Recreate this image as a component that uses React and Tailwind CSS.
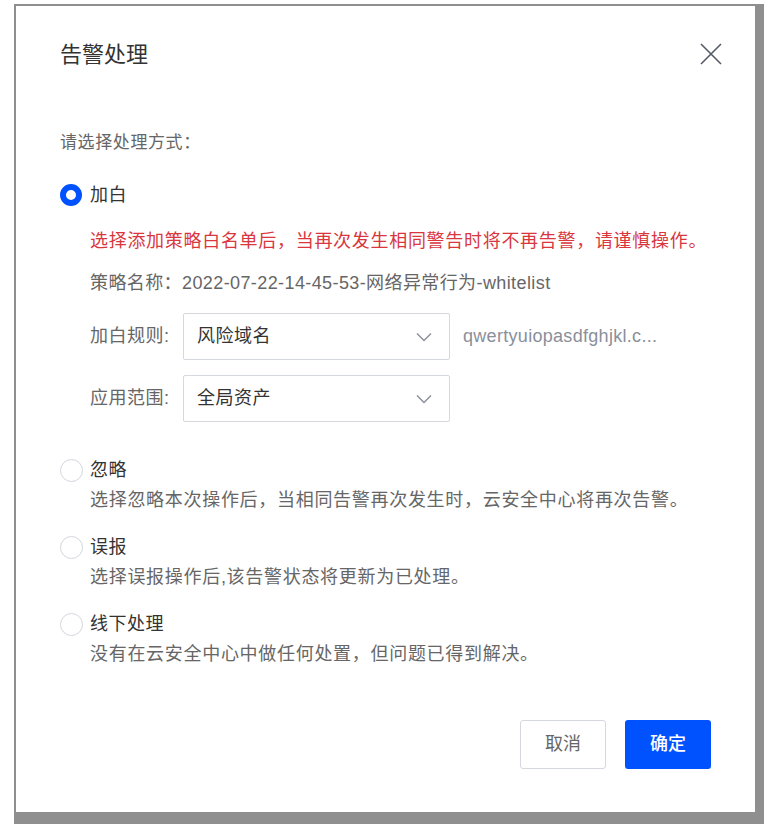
// Alert handling dialog
import { useState } from 'react';

const font = { fontFamily: '"Liberation Sans", "Noto Sans CJK SC", sans-serif' };

function Radio({ checked }) {
  return checked ? (
    <span className="w-[22px] h-[22px] rounded-full border-[6px] border-[#0052ff] bg-white shrink-0" />
  ) : (
    <span className="w-[23px] h-[23px] rounded-full border border-[#d3d6dc] bg-white shrink-0" />
  );
}

function Chevron() {
  return (
    <svg width="16" height="10" viewBox="0 0 16 10" fill="none">
      <path d="M1 1.5 L8 8.5 L15 1.5" stroke="#8a8f99" strokeWidth="1.4" />
    </svg>
  );
}

function Select({ value }) {
  return (
    <div className="w-[267px] h-[47px] border border-[#d5d8de] rounded-[2px] flex items-center justify-between pl-[13px] pr-[17px] text-[18px] tracking-[0.5px] text-[#333]">
      <span>{value}</span>
      <Chevron />
    </div>
  );
}

function Option({ label, desc, checked, onClick, className }) {
  return (
    <div className={className}>
      <div className="flex items-center h-6 cursor-pointer" onClick={onClick}>
        <div className="w-[30px] flex items-center"><Radio checked={checked} /></div>
        <span className="text-[18px] tracking-[0.5px] text-[#333] leading-6">{label}</span>
      </div>
      {desc && <div className="pl-[30px] mt-[6px] text-[18px] tracking-[0.7px] leading-6 text-[#666]">{desc}</div>}
    </div>
  );
}

export default function App() {
  const [mode, setMode] = useState('white');

  return (
    <div className="w-[764px] h-[824px] bg-white pl-[14px] pt-[4px] flex" style={font}>
      <div className="flex-1 bg-[#8f8f8f] pl-[2px] pt-[2px] pr-[9px] pb-[12px] flex">
        <div className="flex-1 bg-white px-[44px] pt-[33px] pb-[43px] flex flex-col">
          {/* header */}
          <div className="flex items-center justify-between h-[30px]">
            <span className="text-[22px] text-[#333]">告警处理</span>
            <svg width="22" height="22" viewBox="0 0 22 22" className="mr-[-11px]">
              <path d="M1 1 L21 21 M21 1 L1 21" stroke="#555b66" strokeWidth="1.6" />
            </svg>
          </div>

          <div className="mt-[62px] text-[17px] tracking-[0.6px] leading-6 text-[#666]">请选择处理方式：</div>

          <Option label="加白" checked={mode === 'white'} onClick={() => setMode('white')} className="mt-[28px]" />

          {mode === 'white' && (
            <div className="pl-[30px]">
              <div className="mt-[22px] text-[18px] tracking-[0.7px] leading-6 text-[#d9363e]">
                选择添加策略白名单后，当再次发生相同警告时将不再告警，请谨慎操作。
              </div>
              <div className="mt-[18px] text-[18px] tracking-[0.4px] leading-6 text-[#666]">
                策略名称：2022-07-22-14-45-53-网络异常行为-whitelist
              </div>
              <div className="mt-[18px] flex items-center">
                <span className="w-[93px] text-[18px] tracking-[0.5px] text-[#666]">加白规则:</span>
                <Select value="风险域名" />
                <span className="ml-[13px] text-[18px] tracking-[0.3px] text-[#8a8f99]">qwertyuiopasdfghjkl.c...</span>
              </div>
              <div className="mt-[15px] flex items-center">
                <span className="w-[93px] text-[18px] tracking-[0.5px] text-[#666]">应用范围:</span>
                <Select value="全局资产" />
              </div>
            </div>
          )}

          <Option
            label="忽略"
            desc="选择忽略本次操作后，当相同告警再次发生时，云安全中心将再次告警。"
            checked={mode === 'ignore'}
            onClick={() => setMode('ignore')}
            className="mt-[36px]"
          />
          <Option
            label="误报"
            desc="选择误报操作后,该告警状态将更新为已处理。"
            checked={mode === 'false'}
            onClick={() => setMode('false')}
            className="mt-[23px]"
          />
          <Option
            label="线下处理"
            desc="没有在云安全中心中做任何处置，但问题已得到解决。"
            checked={mode === 'offline'}
            onClick={() => setMode('offline')}
            className="mt-[23px]"
          />

          <div className="mt-auto flex justify-end gap-[19px]">
            <button className="w-[86px] h-[49px] border border-[#d5d8de] rounded-[3px] bg-white text-[18px] text-[#666]">取消</button>
            <button className="w-[86px] h-[49px] rounded-[3px] bg-[#0052ff] text-[18px] text-white font-medium">确定</button>
          </div>
        </div>
      </div>
    </div>
  );
}
